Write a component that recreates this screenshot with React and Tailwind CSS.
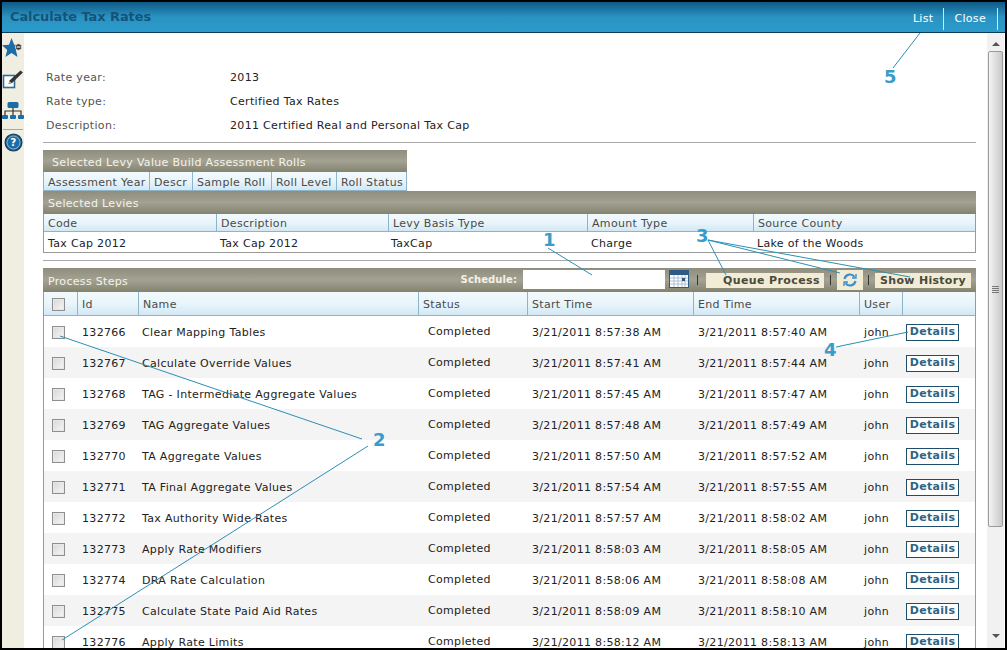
const FONT = "font-['DejaVu_Sans','Verdana',sans-serif]";

const steps = [
  ["132766", "Clear Mapping Tables", "3/21/2011 8:57:38 AM", "3/21/2011 8:57:40 AM"],
  ["132767", "Calculate Override Values", "3/21/2011 8:57:41 AM", "3/21/2011 8:57:44 AM"],
  ["132768", "TAG - Intermediate Aggregate Values", "3/21/2011 8:57:45 AM", "3/21/2011 8:57:47 AM"],
  ["132769", "TAG Aggregate Values", "3/21/2011 8:57:48 AM", "3/21/2011 8:57:49 AM"],
  ["132770", "TA Aggregate Values", "3/21/2011 8:57:50 AM", "3/21/2011 8:57:52 AM"],
  ["132771", "TA Final Aggregate Values", "3/21/2011 8:57:54 AM", "3/21/2011 8:57:55 AM"],
  ["132772", "Tax Authority Wide Rates", "3/21/2011 8:57:57 AM", "3/21/2011 8:58:02 AM"],
  ["132773", "Apply Rate Modifiers", "3/21/2011 8:58:03 AM", "3/21/2011 8:58:05 AM"],
  ["132774", "DRA Rate Calculation", "3/21/2011 8:58:06 AM", "3/21/2011 8:58:08 AM"],
  ["132775", "Calculate State Paid Aid Rates", "3/21/2011 8:58:09 AM", "3/21/2011 8:58:10 AM"],
  ["132776", "Apply Rate Limits", "3/21/2011 8:58:12 AM", "3/21/2011 8:58:13 AM"],
];

const Check = () => (
  <span className="block w-[13px] h-[13px] border border-[#8f8f8f] bg-gradient-to-br from-[#d8d8d8] to-[#f6f6f6] shadow-[inset_0_0_0_1px_#e8e8e8]" />
);

const Bar = ({ className = "", children }) => (
  <div className={`bg-gradient-to-b from-[#8f8d7c] via-[#a3a293] to-[#84836f] text-[#f3f3ea] ${className}`}>
    {children}
  </div>
);

const HeadCell = ({ className = "", children }) => (
  <div className={`flex items-center pl-[4px] pt-[4px] border-r border-[#8db4c9] last:border-r-0 text-[#4a4a4a] ${className}`}>
    {children}
  </div>
);

const HEAD = "bg-gradient-to-b from-[#f2fafd] via-[#e9f5fb] to-[#d3e8f4]";

const Field = ({ label, value }) => (
  <div className="flex h-[24px] items-center pt-[2px]">
    <div className="w-[184px] text-[#555]">{label}</div>
    <div className="text-[#222]">{value}</div>
  </div>
);

const SideIcons = () => (
  <div className="w-[22px] shrink-0 bg-[#f0eee0] flex flex-col pt-[5px]">
    <svg className="shrink-0" width="22" height="21" viewBox="0 0 22 21">
      <path d="M9.5 0l2.7 6.8 7 .5-5.4 4.6 1.8 7.1-6.1-3.9-6.1 3.9 1.8-7.1L0 7.3l7-.5z" fill="#1c6ca8" />
      <circle cx="16.5" cy="9" r="3.2" fill="#333" stroke="#f0eee0" strokeWidth="0.8" />
      <rect x="14.6" y="8.4" width="3.8" height="1.2" fill="#fff" />
    </svg>
    <svg className="shrink-0 mt-[10px]" width="22" height="22" viewBox="0 0 22 22">
      <rect x="1.5" y="6.5" width="11" height="12" fill="#fff" stroke="#2a6f9e" strokeWidth="1.6" />
      <path d="M6.5 15l1-3.5L18.5 1.5l2.4 2L10 14z" fill="#333" />
      <path d="M6.5 15l.9-3 2 1.7z" fill="#c9b98a" />
    </svg>
    <svg className="shrink-0 mt-[9px]" width="22" height="20" viewBox="0 0 22 20">
      <rect x="5.5" y="2" width="11" height="6" rx="1.5" fill="#1c6ca8" />
      <path d="M11 8v3M3 15v-4h16v4M11 11v4" stroke="#333" strokeWidth="1.2" fill="none" />
      <rect x="0" y="15" width="6" height="4" rx="1" fill="#1c6ca8" />
      <rect x="8" y="15" width="6" height="4" rx="1" fill="#1c6ca8" />
      <rect x="16" y="15" width="6" height="4" rx="1" fill="#1c6ca8" />
    </svg>
    <div className="shrink-0 w-[20px] h-px bg-[#a9a9a0] mt-[9px] ml-px" />
    <svg className="shrink-0 mt-[3px] ml-[2px]" width="19" height="19" viewBox="0 0 20 20">
      <circle cx="10" cy="10" r="8.8" fill="#1c6ca8" stroke="#17405f" strokeWidth="1.4" />
      <circle cx="10" cy="10" r="6.8" fill="none" stroke="#9cc7e0" strokeWidth="0.8" />
      <text x="10" y="14" textAnchor="middle" fontSize="11" fontWeight="700" fill="#fff" fontFamily="DejaVu Sans">?</text>
    </svg>
  </div>
);

const Scrollbar = () => (
  <div className="w-[17px] shrink-0 bg-[#f1f1f1] flex flex-col items-center mr-px">
    <div className="h-[18px] flex items-center justify-center pt-[3px]">
      <div className="w-0 h-0 border-x-[4px] border-x-transparent border-b-[4px] border-b-[#555]" />
    </div>
    <div className="w-[15px] h-[476px] border border-[#9a9a9a] rounded-[2px] bg-gradient-to-r from-[#f4f4f4] to-[#c9c9c9] flex flex-col items-center justify-center gap-[1px]">
      <div className="w-[7px] h-px bg-[#777]" />
      <div className="w-[7px] h-px bg-[#777]" />
      <div className="w-[7px] h-px bg-[#777]" />
      <div className="w-[7px] h-px bg-[#777]" />
    </div>
    <div className="flex-1" />
    <div className="h-[20px] flex items-center justify-center pb-[4px]">
      <div className="w-0 h-0 border-x-[4px] border-x-transparent border-t-[4px] border-t-[#555]" />
    </div>
  </div>
);

// leader lines and numbers drawn on top of the screenshot
const Callouts = () => (
  <svg className="absolute -left-[2px] -top-[2px] pointer-events-none" width="1007" height="650" viewBox="0 0 1007 650">
    <g stroke="#2b8fb5" strokeWidth="1" fill="none">
      <line x1="920" y1="33" x2="893" y2="68" />
      <line x1="548" y1="248" x2="592" y2="275" />
      <line x1="708" y1="240" x2="726" y2="275" />
      <line x1="708" y1="240" x2="840" y2="273" />
      <line x1="708" y1="240" x2="910" y2="277" />
      <line x1="836" y1="347" x2="908" y2="332" />
      <line x1="60" y1="336" x2="362" y2="439" />
      <line x1="62" y1="640" x2="368" y2="446" />
    </g>
    <g fill="#3a9cc8" fontFamily="DejaVu Sans" fontWeight="700" fontSize="18">
      <text x="884" y="83">5</text>
      <text x="543" y="246">1</text>
      <text x="696" y="242">3</text>
      <text x="824" y="356">4</text>
      <text x="373" y="446">2</text>
    </g>
  </svg>
);

const App = () => {
  return (
    <div className={`${FONT} relative w-[1007px] h-[650px] overflow-hidden border-2 border-black bg-white text-[11px] tracking-[0.32px]`}>
      <div className="h-[31px] border-b border-[#0c3c58] bg-gradient-to-b from-[#0e5a85] via-[#2a93c3] to-[#2b9bcb] flex items-center justify-between">
        <div className="pl-[8px] text-[13px] font-bold tracking-[-0.1px] text-[#155378]">Calculate Tax Rates</div>
        <div className="flex items-center h-[22px] text-white text-[11px] mr-[7px] mt-[3px]">
          <div className="px-[10px] pt-[2px] h-full flex items-center border-r border-[#cfe8f3]">List</div>
          <div className="pl-[10px] pr-[11px] pt-[2px] h-full flex items-center border-r border-[#cfe8f3]">Close</div>
        </div>
      </div>

      <div className="flex h-[615px]">
        <SideIcons />
        <div className="flex-1 overflow-hidden pl-[19px] pr-[11px]">
          <div className="pt-[32px] pl-[3px]">
            <Field label="Rate year:" value="2013" />
            <Field label="Rate type:" value="Certified Tax Rates" />
            <Field label="Description:" value="2011 Certified Real and Personal Tax Cap" />
          </div>

          <div className="mt-[5px] h-px bg-[#aaa]" />

          <div className="mt-[7px] w-[364px]">
            <Bar className="h-[22px] flex items-center pl-[9px] pt-[4px]">Selected Levy Value Build Assessment Rolls</Bar>
            <div className={`${HEAD} h-[19px] flex border-b border-[#8db4c9] border-l border-r`}>
              <HeadCell className="w-[106px]">Assessment Year</HeadCell>
              <HeadCell className="w-[43px]">Descr</HeadCell>
              <HeadCell className="w-[79px]">Sample Roll</HeadCell>
              <HeadCell className="w-[65px]">Roll Level</HeadCell>
              <HeadCell className="flex-1">Roll Status</HeadCell>
            </div>
          </div>

          <Bar className="h-[23px] flex items-center pl-[5px] pt-[4px]">Selected Levies</Bar>
          <div className="border-x border-b border-[#9a9a9a]">
            <div className={`${HEAD} h-[18px] flex border-b border-[#8db4c9]`}>
              <HeadCell className="w-[173px]">Code</HeadCell>
              <HeadCell className="w-[172px]">Description</HeadCell>
              <HeadCell className="w-[199px]">Levy Basis Type</HeadCell>
              <HeadCell className="w-[166px]">Amount Type</HeadCell>
              <HeadCell className="flex-1">Source County</HeadCell>
            </div>
            <div className="h-[20px] flex items-center pt-[4px] text-[#222]">
              <div className="w-[172px] pl-[4px]">Tax Cap 2012</div>
              <div className="w-[172px] pl-[4px]">Tax Cap 2012</div>
              <div className="w-[199px] pl-[3px]">TaxCap</div>
              <div className="w-[166px] pl-[4px]">Charge</div>
              <div className="pl-[4px]">Lake of the Woods</div>
            </div>
          </div>

          <div className="mt-[7px] h-px bg-[#aaa]" />

          <Bar className="mt-[7px] h-[24px] flex items-center justify-between pl-[5px] pr-[5px]">
            <span className="pt-[4px]">Process Steps</span>
            <div className="flex items-center">
              <span className="font-bold text-[10px] tracking-[0.1px] text-[#f3f1e2] mr-[6px] mb-[2px]">Schedule:</span>
              <div className="w-[142px] h-[19px] bg-white mr-[4px] mb-[2px]" />
              <svg className="mb-[2px]" width="20" height="18" viewBox="0 0 20 18">
                <rect x="0.5" y="0.5" width="19" height="17" fill="#fff" stroke="#2f5a85" />
                <rect x="1" y="1" width="18" height="4" fill="#2f5a85" />
                <path d="M1 8h18M1 11h18M1 14h18M5 5v12M9 5v12M13 5v12M16 5v12" stroke="#9db3c9" strokeWidth="0.8" />
                <rect x="13" y="8" width="3" height="3" fill="#2f5a85" />
              </svg>
              <span className="mx-[8px] w-px h-[10px] bg-[#333]" />
              <div className="w-[118px] h-[15px] pt-[2px] bg-[#f2ecd6] flex items-center justify-end pr-[4px] font-bold text-[#4a4a3c] tracking-[0.4px]">
                Queue Process
              </div>
              <span className="mx-[6px] w-px h-[10px] bg-[#333]" />
              <div className="w-[26px] h-[20px] bg-[#f2ecd6] flex items-center justify-center">
                <svg width="16" height="16" viewBox="0 0 16 16" fill="none" stroke="#3a8fd0" strokeWidth="2.2">
                  <path d="M2.5 7a5.6 5.6 0 0 1 10-2.2" />
                  <path d="M14 2v4h-4" strokeWidth="1.4" />
                  <path d="M13.5 9a5.6 5.6 0 0 1-10 2.2" />
                  <path d="M2 14v-4h4" strokeWidth="1.4" />
                </svg>
              </div>
              <span className="ml-[5px] mr-[6px] w-px h-[10px] bg-[#333]" />
              <div className="w-[96px] h-[15px] pt-[2px] bg-[#f2ecd6] flex items-center justify-center font-bold text-[#4a4a3c] tracking-[0.3px]">
                Show History
              </div>
            </div>
          </Bar>

          <div className="border-l border-r border-[#9a9a9a]">
            <div className={`${HEAD} h-[24px] flex border-b border-[#8db4c9]`}>
              <HeadCell className="w-[34px] !pl-[8px] !pt-[2px]">
                <Check />
              </HeadCell>
              <HeadCell className="w-[61px]">Id</HeadCell>
              <HeadCell className="w-[280px]">Name</HeadCell>
              <HeadCell className="w-[109px]">Status</HeadCell>
              <HeadCell className="w-[166px]">Start Time</HeadCell>
              <HeadCell className="w-[166px]">End Time</HeadCell>
              <HeadCell className="w-[43px]">User</HeadCell>
              <HeadCell className="flex-1" />
            </div>
            {steps.map((s, i) => (
              <div key={s[0]} className={`h-[31px] flex items-center pt-[4px] text-[#222] ${i % 2 === 1 ? "bg-[#f4f4f4]" : "bg-white"}`}>
                <div className="w-[34px] pl-[8px] -translate-y-px">
                  <Check />
                </div>
                <div className="w-[61px] pl-[4px]">{s[0]}</div>
                <div className="w-[280px] pl-[3px]">{s[1]}</div>
                <div className="w-[109px] pl-[9px] -translate-y-px">Completed</div>
                <div className="w-[166px] pl-[4px]">{s[2]}</div>
                <div className="w-[166px] pl-[4px]">{s[3]}</div>
                <div className="w-[46px] pl-[4px]">john</div>
                <div className="w-[53px] h-[17px] -translate-y-px border border-[#1f4e6b] bg-white flex items-center justify-center font-bold text-[#2f6483] tracking-[0.3px]">
                  Details
                </div>
              </div>
            ))}
          </div>
        </div>
        <Scrollbar />
      </div>
      <Callouts />
    </div>
  );
};

export default App;
